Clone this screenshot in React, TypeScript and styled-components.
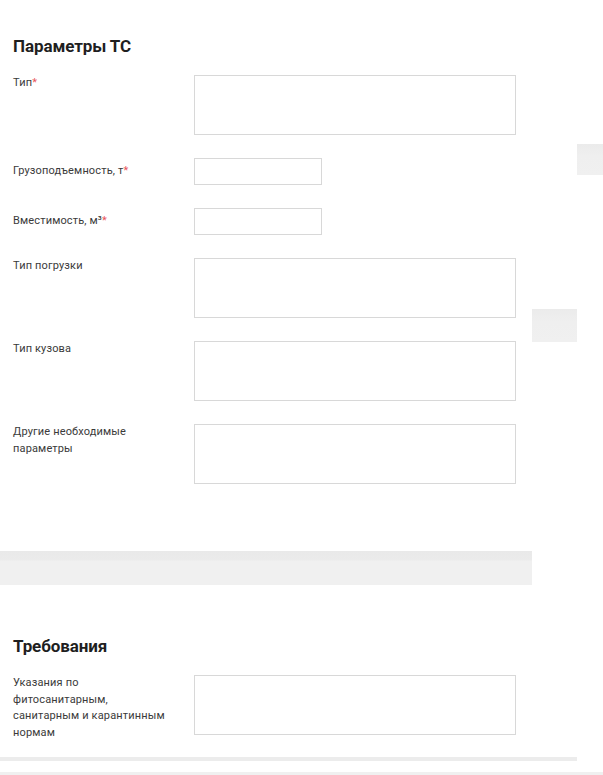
import React from "react";
import styled, { createGlobalStyle } from "styled-components";

const Global = createGlobalStyle`
  html, body { margin: 0; padding: 0; background: #ffffff; }
  body { font-family: Roboto, "Noto Sans", Arial, sans-serif; color: #2b2b2b; }
  * { box-sizing: border-box; }
`;

const Page = styled.div`
  width: 603px;
  display: grid;
  grid-template-columns: 532px 71px;
  overflow: hidden;
`;

const Main = styled.div`
  display: flex;
  flex-direction: column;
`;

const Section = styled.section<{ $top: number; $bottom: number }>`
  padding: ${(p) => p.$top}px 16px ${(p) => p.$bottom}px 13px;
  display: flex;
  flex-direction: column;
`;

const Heading = styled.h2`
  margin: 0 0 18px 0;
  font-size: 17px;
  line-height: 22px;
  font-weight: 700;
  color: #1f1f1f;
  letter-spacing: -0.1px;
`;

const Fields = styled.div`
  display: flex;
  flex-direction: column;
  gap: 23px;
`;

const Row = styled.div<{ $center?: boolean }>`
  display: grid;
  grid-template-columns: 181px 322px;
  align-items: ${(p) => (p.$center ? "center" : "start")};
`;

const Label = styled.label`
  font-size: 11px;
  line-height: 16.6px;
  color: #3a3a3a;
  padding-right: 26px;
  letter-spacing: 0.15px;
`;

const Req = styled.span`
  color: #e8545a;
`;

const Field = styled.div<{ $small?: boolean }>`
  width: ${(p) => (p.$small ? "128px" : "322px")};
  height: ${(p) => (p.$small ? "27px" : "60px")};
  border: 1px solid #d8d8d8;
  background: #ffffff;
`;

const Divider = styled.div`
  height: 34px;
  background: linear-gradient(#e9e9e9 0, #ebebeb 9px, #f0f0f0 10px, #f0f0f0 100%);
`;

const Side = styled.aside`
  display: flex;
  flex-direction: column;
  align-items: flex-start;
`;

const SideBlock = styled.div<{ $top: number; $left: number; $w: number; $h: number }>`
  margin-top: ${(p) => p.$top}px;
  margin-left: ${(p) => p.$left}px;
  width: ${(p) => p.$w}px;
  height: ${(p) => p.$h}px;
  background: linear-gradient(#ebebeb 0, #efefef 40%, #f0f0f0 100%);
`;

const Footer = styled.div`
  display: flex;
  flex-direction: column;
`;

const FooterLine = styled.div`
  width: 577px;
  height: 4px;
  background: #ececec;
`;

const FooterBand = styled.div`
  margin-top: 11px;
  height: 6px;
  background: #f0f0f0;
`;

type FieldDef = { label: React.ReactNode; small?: boolean };

const params: FieldDef[] = [
  { label: <>Тип<Req>*</Req></> },
  { label: <>Грузоподъемность, т<Req>*</Req></>, small: true },
  { label: <>Вместимость, м³<Req>*</Req></>, small: true },
  { label: "Тип погрузки" },
  { label: "Тип кузова" },
  { label: "Другие необходимые параметры" },
];

const reqs: FieldDef[] = [
  { label: "Указания по фитосанитарным, санитарным и карантинным нормам" },
];

const FieldList = ({ items }: { items: FieldDef[] }) => (
  <Fields>
    {items.map((f, i) => (
      <Row key={i} $center={f.small}>
        <Label>{f.label}</Label>
        <Field $small={f.small} />
      </Row>
    ))}
  </Fields>
);

export default function App() {
  return (
    <>
      <Global />
      <Page>
        <Main>
          <Section $top={35} $bottom={67}>
            <Heading>Параметры ТС</Heading>
            <FieldList items={params} />
          </Section>
          <Divider />
          <Section $top={50} $bottom={16}>
            <Heading>Требования</Heading>
            <FieldList items={reqs} />
          </Section>
        </Main>
        <Side>
          <SideBlock $top={144} $left={45} $w={26} $h={31} />
          <SideBlock $top={134} $left={0} $w={45} $h={33} />
        </Side>
      </Page>
      <Footer>
        <FooterLine />
        <FooterBand />
      </Footer>
    </>
  );
}
